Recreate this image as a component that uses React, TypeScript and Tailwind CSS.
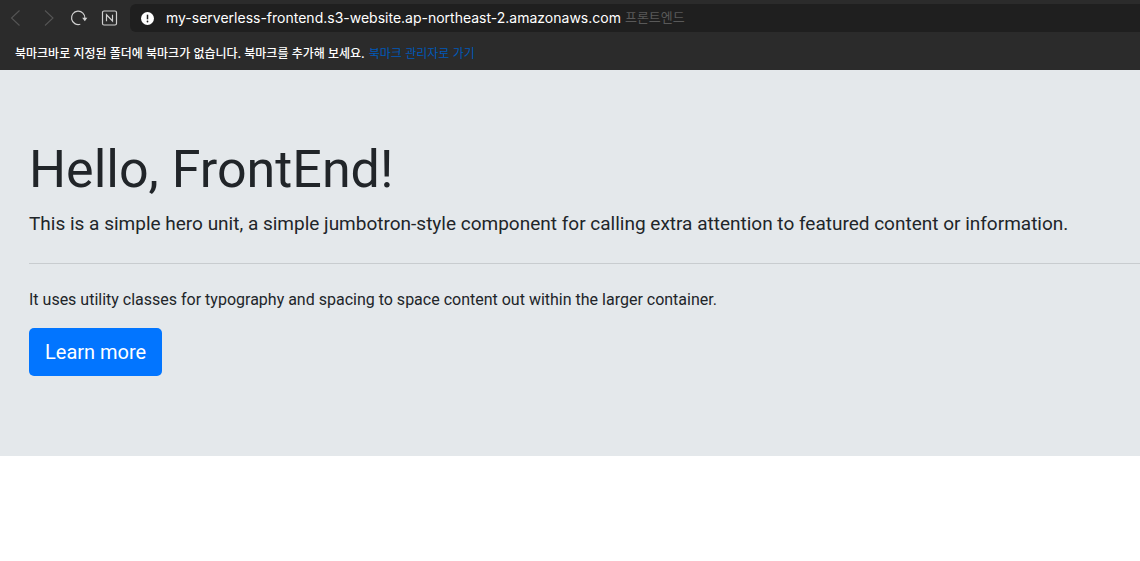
/**
 * Browser toolbar in whale dark theme, with the jumbotron page underneath
 */

const navButtons = [
  { label: "뒤로", path: "M12.5 1.5 4.5 9l8 7.5", color: "text-[#555555]" },
  { label: "앞으로", path: "M5 1.5 13 9l-8 7.5", color: "text-[#555555]" },
];

function Toolbar() {
  return (
    <header className="bg-[#2b2b2b] font-['Inter','Noto_Sans_CJK_KR',sans-serif]">
      <nav className="flex items-center pt-1 pl-[7px]">
        <div className="mr-3 flex shrink-0 gap-4">
          {navButtons.map((btn) => (
            <button key={btn.label} type="button" aria-label={btn.label} className={btn.color}>
              <svg width="17" height="18" viewBox="0 0 17 18" fill="none" stroke="currentColor" strokeWidth="1.1">
                <path d={btn.path} />
              </svg>
            </button>
          ))}
        </div>

        {/* Reload */}
        <button type="button" aria-label="새로고침" className="mr-3 shrink-0 text-[#d0d0d0]">
          <svg width="20" height="18" viewBox="0 0 20 18" fill="none" stroke="currentColor" strokeWidth="1.2">
            <path d="M11.3 15.2A6.7 6.7 0 1 1 15.9 9.2" />
            <path d="M13.2 8.8h5.2l-2.6 3.4z" fill="currentColor" stroke="none" />
          </svg>
        </button>

        {/* Naver home */}
        <button type="button" aria-label="네이버" className="mr-3 shrink-0 text-[#d0d0d0]">
          <svg width="17" height="18" viewBox="0 0 17 18" fill="none" stroke="currentColor" strokeWidth="1.2">
            <rect x="1.5" y="2" width="14" height="14" rx="1.5" />
            <path d="M5.5 12.2V5.8l6 6.2V5.8" />
          </svg>
        </button>

        {/* Address bar */}
        <div className="flex h-7 min-w-0 flex-1 items-center rounded-l-md bg-[#1f1f1f] pl-[11px]">
          <svg width="13" height="13" viewBox="0 0 13 13" className="mr-3 shrink-0" aria-hidden="true">
            <circle cx="6.5" cy="6.5" r="6.5" fill="#fff" />
            <path d="M6.5 2.7v4.6" stroke="#1f1f1f" strokeWidth="1.5" />
            <circle cx="6.5" cy="9.5" r="0.9" fill="#1f1f1f" />
          </svg>
          <input
            type="text"
            aria-label="주소"
            defaultValue="my-serverless-frontend.s3-website.ap-northeast-2.amazonaws.com"
            className="field-sizing-content text-sm text-white outline-none"
          />
          <span className="ml-1 text-[13px] whitespace-nowrap text-[#595959]">프론트엔드</span>
        </div>
      </nav>

      {/* Bookmark bar */}
      <div className="flex h-[38px] items-center gap-1 pt-1.5 pl-[15px] text-xs whitespace-nowrap">
        <span className="font-medium text-white">북마크바로 지정된 폴더에 북마크가 없습니다. 북마크를 추가해 보세요.</span>
        <a href="#bookmarks" className="text-[#0059b8]">
          북마크 관리자로 가기
        </a>
      </div>
    </header>
  );
}

export default function App() {
  return (
    <div className="min-h-screen overflow-x-hidden bg-white">
      <Toolbar />

      <main className="bg-[#e4e8eb] pt-16 pb-20 pl-[29px] font-['Roboto',sans-serif] text-[#212529]">
        <h1 className="mb-1 text-[52px] leading-[71px]">Hello, FrontEnd!</h1>
        <p className="text-[19px] leading-[30px]">
          This is a simple hero unit, a simple jumbotron-style component for calling extra attention to featured content or information.
        </p>
        <hr className="my-6 border-[#c8cccf]" />
        <p className="mb-4 text-base">
          It uses utility classes for typography and spacing to space content out within the larger container.
        </p>
        <a href="#learn-more" className="inline-block rounded-[5px] bg-[#0275ff] px-4 py-2 text-xl leading-8 text-white">
          Learn more
        </a>
      </main>
    </div>
  );
}
